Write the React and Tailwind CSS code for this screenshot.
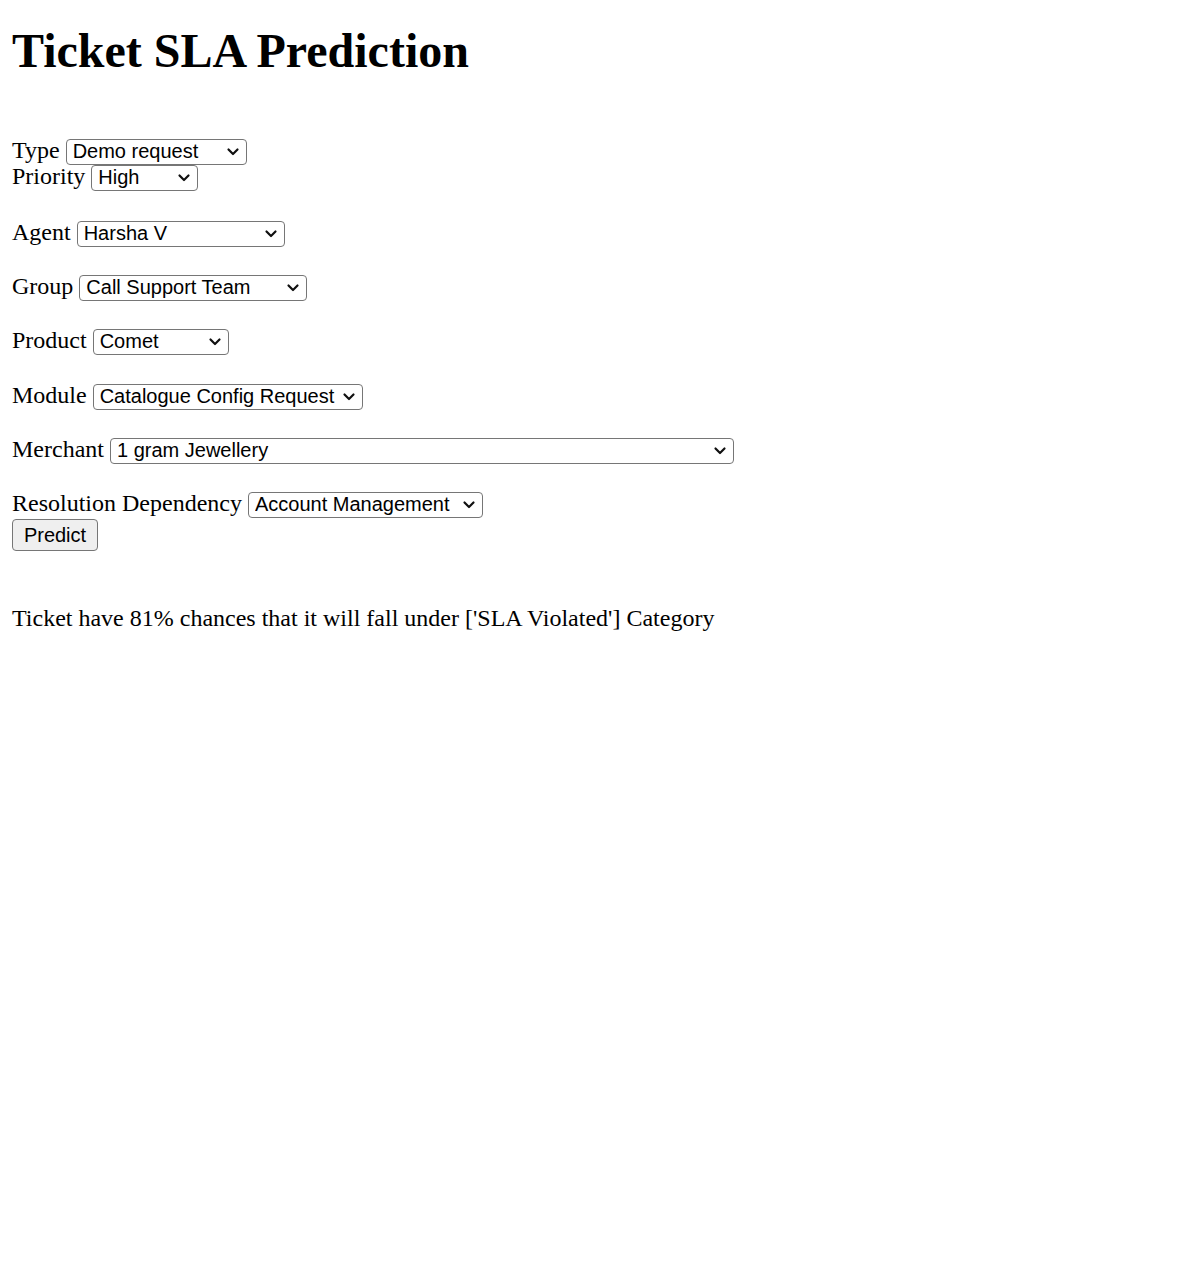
import React from "react";

function Chevron() {
  return (
    <svg
      className="pointer-events-none absolute right-[7px] top-1/2 -translate-y-1/2"
      width="14"
      height="9"
      viewBox="0 0 14 9"
      fill="none"
    >
      <path d="M2.5 2 L7 6.5 L11.5 2" stroke="#101010" strokeWidth="2.2" strokeLinecap="round" strokeLinejoin="round" />
    </svg>
  );
}

function Field({ label, value, options, width, className = "" }) {
  return (
    <div className={`flex items-start gap-[6px] h-[26.67px] ${className}`}>
      <span className="text-[24px] leading-[22px] whitespace-nowrap">{label}</span>
      <div className={`relative ${width}`}>
        <select
          defaultValue={value}
          className="appearance-none w-full h-[26px] border border-[#767676] rounded-[4px] bg-white pl-[6px] pr-[26px] pb-[2px] text-[20px] leading-[22px] text-black font-['Liberation_Sans',Arial,sans-serif]"
        >
          {options.map((o) => (
            <option key={o} value={o}>
              {o}
            </option>
          ))}
        </select>
        <Chevron />
      </div>
    </div>
  );
}

export default function App() {
  return (
    <div className="min-h-[1280px] bg-white pl-[12px] text-black font-['Liberation_Serif','Times_New_Roman',serif]">
      <h1 className="pt-[23.3px] text-[48px] leading-[55px] font-bold">Ticket SLA Prediction</h1>
      <form className="mt-[60.4px]" onSubmit={(e) => e.preventDefault()}>
        <Field label="Type" value="Demo request" options={["Demo request", "Issue", "Query"]} width="w-[181px]" />
        <Field label="Priority" value="High" options={["High", "Medium", "Low"]} width="w-[107px]" />
        <Field
          label="Agent"
          value="Harsha V"
          options={["Harsha V"]}
          width="w-[208px]"
          className="mt-[28.7px]"
        />
        <Field
          label="Group"
          value="Call Support Team"
          options={["Call Support Team"]}
          width="w-[228px]"
          className="mt-[27.65px]"
        />
        <Field label="Product" value="Comet" options={["Comet"]} width="w-[136px]" className="mt-[27.65px]" />
        <Field
          label="Module"
          value="Catalogue Config Request"
          options={["Catalogue Config Request"]}
          width="w-[270px]"
          className="mt-[27.65px]"
        />
        <Field
          label="Merchant"
          value="1 gram Jewellery"
          options={["1 gram Jewellery"]}
          width="w-[624px]"
          className="mt-[27.65px]"
        />
        <Field
          label="Resolution Dependency"
          value="Account Management"
          options={["Account Management"]}
          width="w-[235px]"
          className="mt-[27.65px]"
        />
        <button
          type="submit"
          className="block h-[32px] w-[86px] border border-[#767676] rounded-[4px] bg-[#efefef] text-[20px] leading-[22px] text-black font-['Liberation_Sans',Arial,sans-serif]"
        >
          Predict
        </button>
      </form>
      <p className="mt-[54.4px] text-[24px] leading-[27.6px]">
        Ticket have 81% chances that it will fall under ['SLA Violated'] Category
      </p>
    </div>
  );
}
